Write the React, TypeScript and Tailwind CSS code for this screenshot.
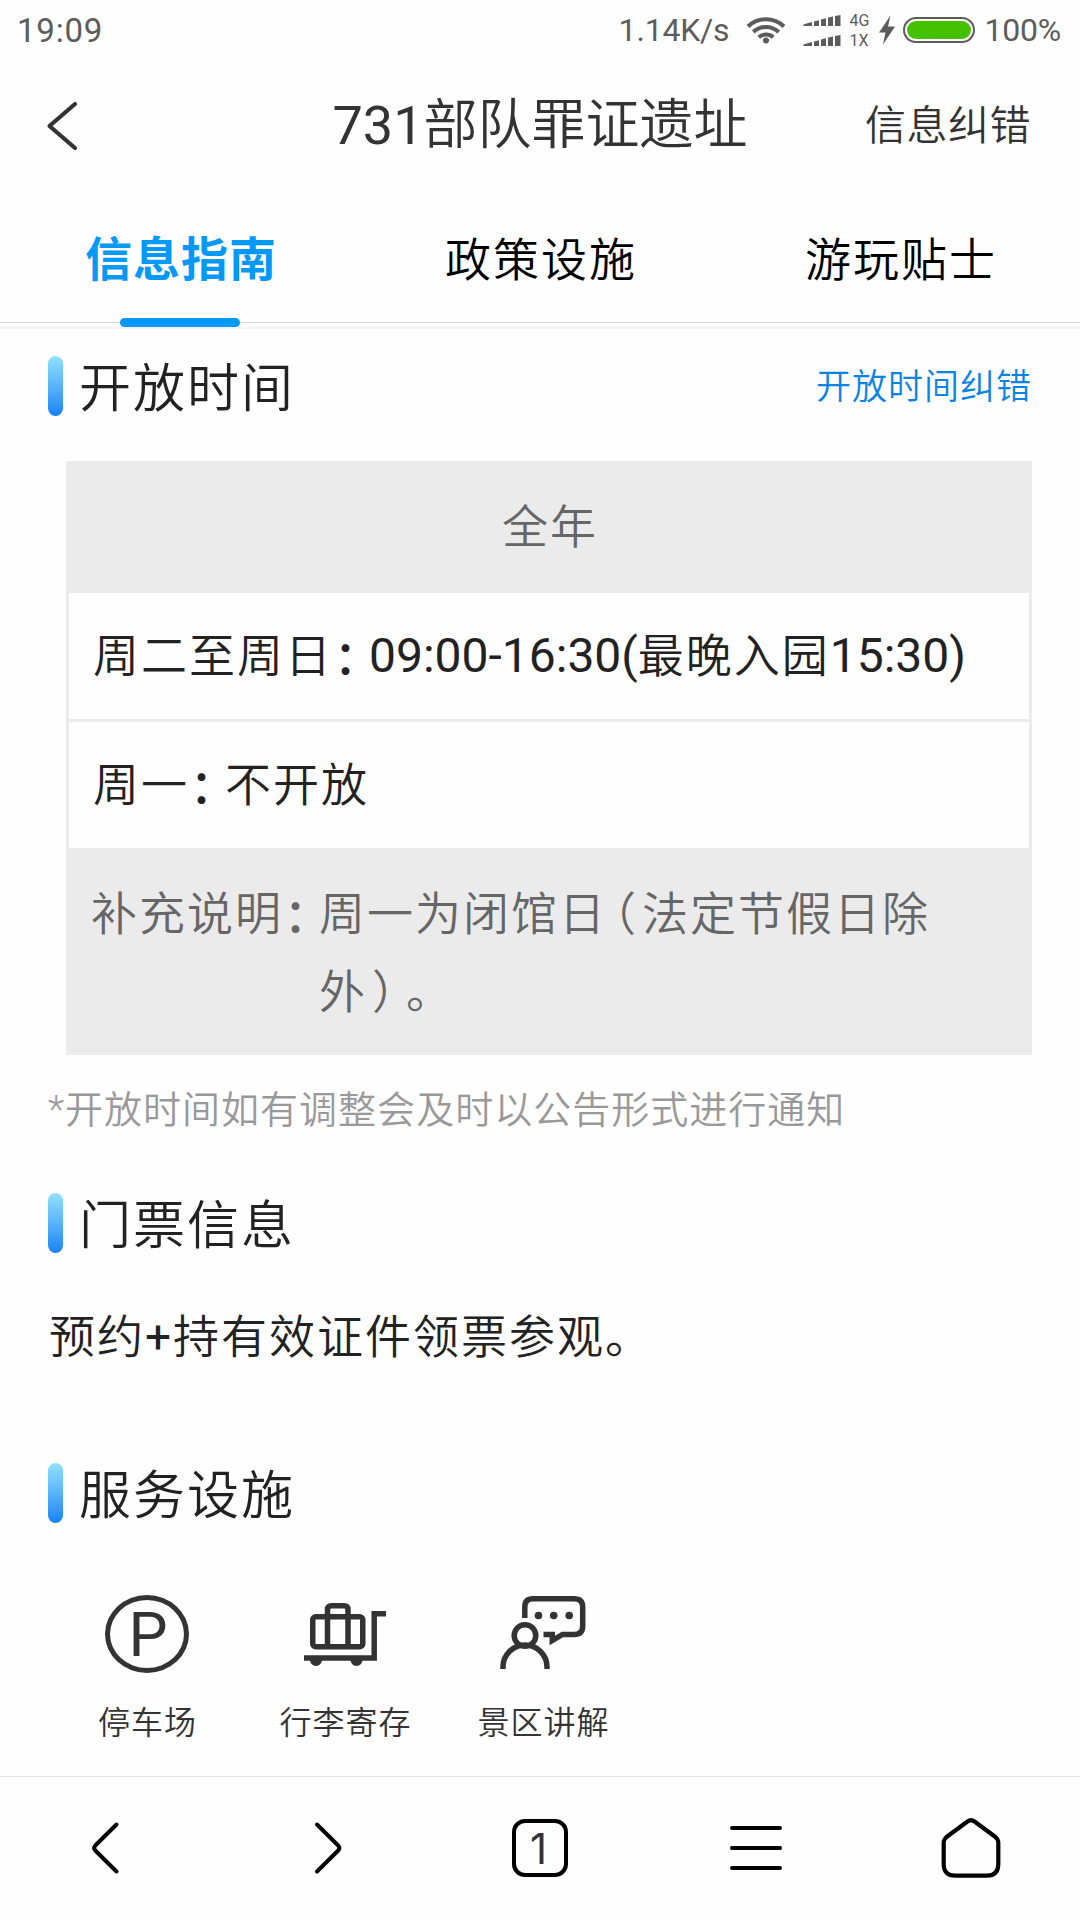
import React, { useState } from "react";

const TABS = ["信息指南", "政策设施", "游玩贴士"];

function StatusBar() {
  return (
    <div className="flex h-[60px] items-center pl-[17px] pr-[18px] text-[32px] leading-none text-[#5c5c5c]">
      <span className="text-[33px] tracking-[0.8px]">19:09</span>
      <span className="ml-auto tracking-[-0.2px]">1.14K/s</span>
      <svg className="ml-[17px]" width="40" height="28" viewBox="0 0 40 28" fill="none" stroke="currentColor" strokeWidth="4">
        <path d="M2 10.5A26 26 0 0 1 38 10.5" />
        <path d="M7.3 16A18.5 18.5 0 0 1 32.7 16" />
        <path d="M12.7 21.3A11 11 0 0 1 27.3 21.3" />
        <circle cx="20" cy="24.6" r="3" fill="currentColor" stroke="none" />
      </svg>
      <div className="ml-[17px] flex flex-col gap-[9px]">
        <SignalBars />
        <SignalBars />
      </div>
      <div className="ml-[8px] flex w-[22px] flex-col pt-[2px] text-[16px] leading-[20px]">
        <span>4G</span>
        <span>1X</span>
      </div>
      <svg className="ml-[7px]" width="18" height="30" viewBox="0 0 18 30" fill="currentColor">
        <path d="M12.5 0.5L1 17.5H7.5L5 29.5L17 11.5H10Z" />
      </svg>
      <div className="ml-[7px] h-[26px] w-[72px] rounded-full border-2 border-[#5c5c5c] p-[2px]">
        <div className="h-full rounded-full bg-[#45c000]" />
      </div>
      <span className="ml-[9px] mr-px tracking-[-0.2px]">100%</span>
    </div>
  );
}

function SignalBars() {
  return (
    <svg width="38" height="11" viewBox="0 0 38 11" fill="currentColor">
      <path d="M0 11L1 9.2L9 7V11Z" />
      <path d="M11 11V6.5L16 5.2V11Z" />
      <path d="M18 11V4.5L23 3.2V11Z" />
      <path d="M25 11V2.5L30 1.5V11Z" />
      <path d="M32 11V1L37.5 0V11Z" />
    </svg>
  );
}

function SectionTitle({ title, action }: { title: string; action?: string }) {
  return (
    <div className="flex h-[60px] items-center">
      <div className="h-[60px] w-[15px] rounded-full bg-gradient-to-b from-[#93e1fd] to-[#1283f3]" />
      <h2 className="ml-[16px] pt-[7px] text-[52px] leading-[60px] font-[350] tracking-[2px] text-[#222]">{title}</h2>
      {action && (
        <a className="ml-auto pt-[3px] text-[35px] leading-[60px] font-[350] tracking-[1px] text-[#0a84e4]">{action}</a>
      )}
    </div>
  );
}

// half-width colon with three quarters of the full advance
function Colon() {
  return (
    <span className="relative top-[2px] mr-[12px] ml-px font-medium tracking-normal [font-feature-settings:'halt']">：</span>
  );
}

function OpeningHours() {
  return (
    <div className="mt-[45px] ml-[18px] border-[3px] border-[#ebebeb] text-[46px] leading-[78px] font-[350] tracking-[2px]">
      <div className="h-[129px] bg-[#ebebeb] pt-[24px] pl-[2px] text-center text-[#666]">全年</div>
      <div className="h-[126px] pt-[24px] pl-[24px] text-[#222]">
        周二至周日
        <Colon />
        <span className="text-[48px] font-normal tracking-normal">09:00-16:30(</span>最晚入园
        <span className="text-[48px] font-normal tracking-normal">15:30)</span>
      </div>
      <div className="h-[129px] border-t-[3px] border-[#ebebeb] pt-[24px] pl-[24px] text-[#222]">
        周一
        <Colon />
        不开放
      </div>
      <div className="flex h-[204px] bg-[#ebebeb] pt-[27px] pl-[22px] text-[#666]">
        <span className="shrink-0">
          补充说明
          <Colon />
        </span>
        <p>
          周一为闭馆日
          <span className="mr-[6px] ml-[6px] tracking-normal [font-feature-settings:'halt']">（</span>
          法定节假日除
          <br />
          外<span className="mr-[11px] ml-[5px] tracking-normal [font-feature-settings:'halt']">）</span>。
        </p>
      </div>
    </div>
  );
}

function LuggageIcon() {
  return (
    <svg className="mt-[2px]" width="82" height="64" viewBox="0 0 82 64" fill="none" stroke="#333" strokeWidth="5.5">
      <rect x="8.75" y="13.75" width="50" height="30" rx="3" />
      <path d="M23.5 44V6.5Q23.5 2.75 27.5 2.75H40Q44 2.75 44 6.5V44" />
      <path d="M0 55H70.2V10.8H82" />
      <path d="M6 57a6 6 0 0 0 12 0ZM46.5 57a6 6 0 0 0 12 0Z" fill="#333" stroke="none" />
    </svg>
  );
}

function GuideIcon() {
  return (
    <svg className="-mt-[2px]" width="86" height="74" viewBox="0 0 86 74" fill="none" stroke="#333" strokeWidth="5.5">
      <circle cx="25" cy="39.5" r="10.8" />
      <path d="M3 73V71A22 22 0 0 1 47 71V73" />
      <path d="M24.8 22V11Q24.8 2.8 33 2.8H74Q82.7 2.8 82.7 11V30Q82.7 38.5 74 38.5H62.5L52.3 44.5V38.5H43.5" />
      <g fill="#333" stroke="none">
        <circle cx="38.5" cy="19.5" r="3.8" />
        <circle cx="53.7" cy="19.5" r="3.8" />
        <circle cx="69.2" cy="19.5" r="3.8" />
      </g>
    </svg>
  );
}

function ParkingIcon() {
  return (
    <div className="flex h-[78px] w-[84px] items-center justify-center rounded-[50%] border-[5.5px] border-[#333] text-[62px] leading-none text-[#333]">
      <span className="pt-[3px] pl-[2px]">P</span>
    </div>
  );
}

function Facility({ icon, label }: { icon: React.ReactNode; label: string }) {
  return (
    <div className="flex w-[198px] flex-col items-center">
      <div className="flex h-[78px] items-center pt-[1px]">{icon}</div>
      <span className="mt-[26px] pl-[1px] text-[32px] leading-[50px] font-[350] tracking-[1px] text-[#333]">{label}</span>
    </div>
  );
}

function BottomNav() {
  return (
    <nav className="mt-auto grid h-[144px] grid-cols-5 items-center justify-items-center border-t border-[#e3e3e3] pb-[2px]">
      <svg className="overflow-visible" width="30" height="56" viewBox="0 0 30 56" fill="none" stroke="#000" strokeWidth="4" strokeLinecap="round" strokeLinejoin="round">
        <path d="M23.5 4.500L2.300 25.500Q0 28 2.300 30.500L23.500 51.500" />
      </svg>
      <svg className="overflow-visible" width="30" height="56" viewBox="0 0 30 56" fill="none" stroke="#000" strokeWidth="4" strokeLinecap="round" strokeLinejoin="round">
        <path d="M8 4.500L29.200 25.500Q31.500 28 29.200 30.500L8 51.500" />
      </svg>
      <div className="flex h-[58px] w-[56px] items-center justify-center rounded-[13px] border-4 border-black font-['Inter','Noto_Sans_CJK_SC',sans-serif] text-[42px] leading-none text-[#333]">
        <span className="pt-[2px] pr-[3px]">1</span>
      </div>
      <svg width="52" height="46" viewBox="0 0 52 46" stroke="#000" strokeWidth="4" strokeLinecap="round">
        <path d="M2 3H50M2 23H50M2 43H50" />
      </svg>
      <svg className="-ml-[2px]" width="60" height="60" viewBox="0 0 60 60" fill="none" stroke="#000" strokeWidth="4.2" strokeLinejoin="round">
        <path d="M26.5 3.5Q30 1 33.5 3.5L54.5 19Q57.3 21.5 57.3 25V46Q57.3 57.7 46 57.7H14Q2.7 57.7 2.7 46V25Q2.7 21.5 5.5 19Z" />
      </svg>
    </nav>
  );
}

export default function App() {
  const [active, setActive] = useState(0);

  return (
    <div className="flex h-[1920px] w-[1080px] flex-col overflow-hidden bg-[#fefefe] font-['Roboto','Noto_Sans_CJK_SC',sans-serif]">
      <StatusBar />

      <header className="grid h-[132px] grid-cols-[1fr_auto_1fr] items-center pl-[48px] pr-[48px] text-[#333]">
        <svg className="-ml-[2px]" width="34" height="50" viewBox="0 0 34 50" fill="none" stroke="currentColor" strokeWidth="4.2" strokeLinecap="round" strokeLinejoin="round">
          <path d="M29 3L3.5 25L29 47" />
        </svg>
        <h1 className="pb-[1px] text-[54px] leading-[80px]">
          731<span className="font-[350]">部队罪证遗址</span>
        </h1>
        <span className="justify-self-end pr-px pb-[1px] text-[41px] leading-[60px] font-[350] tracking-[0.5px]">信息纠错</span>
      </header>

      <div className="grid h-[131px] grid-cols-3 border-b border-[#d8d8d8]">
        {TABS.map((tab, i) => (
          <button
            key={tab}
            onClick={() => setActive(i)}
            className={
              i === active
                ? "relative pt-[6px] pl-[2px] text-[47px] font-bold tracking-[1px] text-[#0599f7]"
                : "relative pt-[7px] pl-[2px] text-[46px] font-[350] tracking-[2px] text-black"
            }
          >
            {tab}
            {i === active && (
              <span className="absolute -bottom-[5px] left-1/2 h-[9px] w-[120px] -translate-x-1/2 rounded-full bg-[#0599f7]" />
            )}
          </button>
        ))}
      </div>
      <div className="mt-[4px] h-[2px] bg-[#f1f4f4]" />

      <main className="pl-[48px] pr-[48px] pt-[27px]">
        <SectionTitle title="开放时间" action="开放时间纠错" />
        <OpeningHours />
        <p className="mt-[25px] text-[38px] leading-[60px] font-[350] tracking-[1px] text-[#999]">
          *开放时间如有调整会及时以公告形式进行通知
        </p>

        <div className="mt-[53px]">
          <SectionTitle title="门票信息" />
        </div>
        <p className="mt-[45px] pl-px text-[46px] leading-[78px] font-[350] tracking-[2px] text-[#222]">
          预约<span className="font-normal">+</span>持有效证件领票参观。
        </p>

        <div className="mt-[87px]">
          <SectionTitle title="服务设施" />
        </div>
        <div className="mt-[71px] flex">
          <Facility icon={<ParkingIcon />} label="停车场" />
          <Facility icon={<LuggageIcon />} label="行李寄存" />
          <Facility icon={<GuideIcon />} label="景区讲解" />
        </div>
      </main>

      <BottomNav />
    </div>
  );
}
